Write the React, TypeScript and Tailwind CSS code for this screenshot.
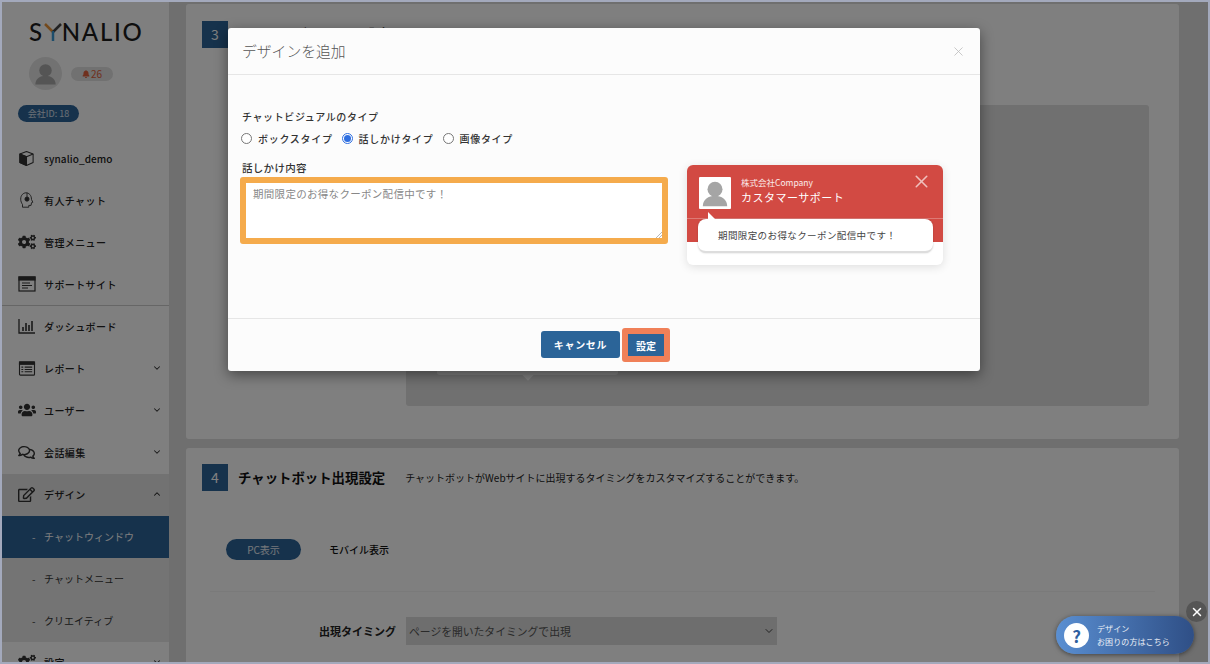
import { ChevronDown, ChevronUp, X } from "lucide-react";
import { FaBell, FaCogs, FaRegComments, FaRegEdit, FaUsers } from "react-icons/fa";
import type { ReactNode } from "react";

const FONT = "font-['Noto_Sans_CJK_JP','Noto_Sans',sans-serif]";

function UserGlyph({ className }: { className?: string }) {
  return (
    <svg viewBox="0 0 32 32" className={className}>
      <circle cx="16" cy="12" r="8" fill="currentColor" />
      <path d="M3 30c0-7 6-11 13-11s13 4 13 11z" fill="currentColor" />
    </svg>
  );
}

function CubeIcon() {
  return (
    <svg viewBox="0 0 18 18" className="h-[17px] w-[17px]" fill="none" stroke="#333" strokeWidth="1.100" strokeLinejoin="round">
      <path d="M9 1.500l7 2.700v9L9 16.500l-7-3.300v-9z" />
      <path d="M2 4.200l7 3 7-3" />
      <path d="M2 4.200l7 3v9.300l-7-3.300z" fill="#333" />
    </svg>
  );
}

function HeadsetIcon() {
  return (
    <svg viewBox="0 0 20 20" className="h-[18px] w-[18px]" fill="none" stroke="#333" strokeWidth="1">
      <path d="M5 15v3h7v-2h2.500l.5-3 1.500-.5-1.500-3c0-5-3-7.500-6-7.500S3 4.500 3 9c0 2.500 1 4.500 2 6z" />
      <circle cx="10" cy="9" r="2.300" fill="#333" />
      <path d="M10 2v5" />
    </svg>
  );
}

function WindowIcon() {
  return (
    <svg viewBox="0 0 18 16" className="h-[16px] w-[18px]" fill="none" stroke="#333" strokeWidth="1.200">
      <rect x="1" y="1" width="16" height="14" />
      <rect x="1" y="1" width="16" height="3" fill="#333" />
      <path d="M4 7h8M4 9.500h10M4 12h6" />
    </svg>
  );
}

function BarsIcon() {
  return (
    <svg viewBox="0 0 18 16" className="h-[16px] w-[18px]" fill="none" stroke="#333" strokeWidth="1.300">
      <path d="M1 1v14h16" />
      <path d="M5 13V9M8 13V5M11 13V7M14 13V3" strokeWidth="1.600" />
    </svg>
  );
}

function ListIcon() {
  return (
    <svg viewBox="0 0 18 16" className="h-[15px] w-[18px]" fill="none" stroke="#333" strokeWidth="1.200">
      <rect x="1" y="1" width="16" height="14" rx="1" />
      <rect x="1" y="1" width="16" height="2.500" fill="#333" />
      <path d="M3 6.500h2M3 9h2M3 11.500h2M6.500 6.500h8M6.500 9h8M6.500 11.500h8" />
    </svg>
  );
}

function NavRow({ icon, label, chevron, bg, latin }: { icon: ReactNode; label: string; chevron?: "up" | "down"; bg?: string; latin?: boolean }) {
  return (
    <div className={`flex h-[42px] shrink-0 items-center pb-[2px] pl-[16px] pr-[7px] ${bg ?? ""}`}>
      <div className="flex w-[26px] shrink-0 items-center text-[#333]">{icon}</div>
      <span className={`flex-1 text-[10px] font-medium text-[#222] ${latin ? "tracking-[0.1px]" : "tracking-[0.4px]"}`}>{label}</span>
      {chevron === "down" && <ChevronDown size={10} strokeWidth={2.500} className="text-[#333]" />}
      {chevron === "up" && <ChevronUp size={10} strokeWidth={2.500} className="text-[#222]" />}
    </div>
  );
}

function SubRow({ label, active }: { label: string; active?: boolean }) {
  return (
    <div className={`flex h-[42px] items-center pb-[2px] pl-[30px] text-[10px] ${active ? "bg-[#2c6499] text-white" : "text-[#333]"}`}>
      <span className="w-[12px]">-</span>
      {label}
    </div>
  );
}

function Sidebar() {
  return (
    <aside className="flex w-[167px] shrink-0 flex-col bg-white">
      <div className="h-[136px] shrink-0 pl-[27px]">
        <div className="flex items-center pt-[17px] font-['Lato',sans-serif] text-[24px] font-medium leading-[26px] tracking-[1.700px] text-[#1c1c1c]">
          S
          <svg viewBox="0 0 18 18" className="h-[18px] w-[18px]">
            <path d="M1 1l8 8" stroke="#e8943a" strokeWidth="2.500" fill="none" />
            <path d="M17 1L9 9" stroke="#444" strokeWidth="2.500" fill="none" />
            <path d="M9 8v10" stroke="#3b9bd6" strokeWidth="2.500" fill="none" />
          </svg>
          NALIO
        </div>
        <div className="mt-[12px] flex items-center">
          <div className="flex h-[33px] w-[33px] items-center justify-center rounded-full bg-[#e4e4e4]">
            <UserGlyph className="h-[25px] w-[25px] text-[#aaa]" />
          </div>
          <div className="ml-[9px] flex h-[14px] w-[42px] items-center justify-center gap-[1px] rounded-full bg-[#e2e2e2] text-[10px] text-[#e0603c]">
            <FaBell size={8} />
            26
          </div>
        </div>
        <div className="ml-[-11px] mt-[15px] flex h-[17px] w-[61px] items-center justify-center whitespace-pre rounded-full bg-[#2c6499] text-[9px] text-white/80">
          会社ID: 18
        </div>
      </div>
      <NavRow icon={<CubeIcon />} label="synalio_demo" latin />
      <NavRow icon={<HeadsetIcon />} label="有人チャット" />
      <NavRow icon={<FaCogs size={18} />} label="管理メニュー" />
      <NavRow icon={<WindowIcon />} label="サポートサイト" />
      <div className="-mt-px shrink-0 border-t border-[#ccc]" />
      <NavRow icon={<BarsIcon />} label="ダッシュボード" />
      <NavRow icon={<ListIcon />} label="レポート" chevron="down" />
      <NavRow icon={<FaUsers size={18} />} label="ユーザー" chevron="down" />
      <NavRow icon={<FaRegComments size={17} />} label="会話編集" chevron="down" />
      <NavRow icon={<FaRegEdit size={17} />} label="デザイン" chevron="up" bg="bg-[#e4e4e4]" />
      <div className="shrink-0 bg-[#e8e8e8]">
        <SubRow label="チャットウィンドウ" active />
        <SubRow label="チャットメニュー" />
        <SubRow label="クリエイティブ" />
      </div>
      <NavRow icon={<FaCogs size={18} />} label="設定" chevron="down" />
    </aside>
  );
}

function StepBox({ n }: { n: number }) {
  return (
    <div className="flex h-[27px] w-[26px] shrink-0 items-center justify-center bg-[#2c6499] text-[14px] text-white">{n}</div>
  );
}

function Main() {
  return (
    <main className="min-w-0 flex-1 overflow-hidden bg-[#dedede] pl-[17px] pr-[29px] pt-[2px]">
      <section className="h-[435px] rounded-[3px] bg-white pl-[16px] pr-[30px] pt-[17px]">
        <div className="flex items-center">
          <StepBox n={3} />
          <span className="ml-[10px] mt-[-3px] text-[14px] font-medium text-[#222]">チャットビジュアル設定</span>
        </div>
        <div className="ml-[204px] mt-[57px] h-[301px] rounded-[3px] bg-[#e0e0e0] pl-[31px] pt-[245px]">
          <div className="relative h-[25px] w-[181px] rounded-[3px] bg-white">
            <div className="absolute bottom-[-4px] left-[87px] h-[8px] w-[8px] rotate-45 bg-white" />
          </div>
        </div>
      </section>
      <section className="mt-[9px] h-[300px] rounded-[3px] bg-white pl-[16px] pr-[24px] pt-[16px]">
        <div className="flex items-center">
          <StepBox n={4} />
          <span className="ml-[10px] text-[13.400px] font-bold text-[#111]">チャットボット出現設定</span>
          <span className="mb-[1px] ml-[20px] text-[10px] text-[#222]">チャットボットがWebサイトに出現するタイミングをカスタマイズすることができます。</span>
        </div>
        <div className="ml-[24px] mt-[48px] flex items-center">
          <div className="flex h-[21px] w-[75px] items-center justify-center rounded-full bg-[#2c6499] pb-[1px] text-[10px] text-white/90">PC表示</div>
          <div className="ml-[28px] text-[10px] font-medium text-[#111]">モバイル表示</div>
        </div>
        <div className="ml-[8px] mt-[31px] border-t border-[#f4f4f4]" />
        <div className="mt-[25px] flex items-center">
          <div className="w-[194px] text-right text-[11px] font-bold text-[#222]">出現タイミング</div>
          <div className="ml-[10px] flex h-[28px] w-[371px] items-center justify-between bg-[#dcdcdc] pl-[3px] pr-[2px] text-[10.800px] text-[#555]">
            ページを開いたタイミングで出現
            <ChevronDown size={12} className="text-[#444]" />
          </div>
        </div>
      </section>
    </main>
  );
}

function RadioOption({ label, checked }: { label: string; checked?: boolean }) {
  return (
    <div className="flex items-center">
      <span className={`flex h-[11px] w-[11px] items-center justify-center rounded-full border ${checked ? "border-[#2f6fe0]" : "border-[#777]"} bg-white`}>
        {checked && <span className="h-[7px] w-[7px] rounded-full bg-[#2f6fe0]" />}
      </span>
      <span className="ml-[6px] text-[10px] font-medium tracking-[0.7px] text-[#333]">{label}</span>
    </div>
  );
}

function ChatPreview() {
  return (
    <div className="relative h-[100px] w-[256px] rounded-[6px] bg-white shadow-[0_2px_10px_rgba(0,0,0,0.12)]">
      <div className="h-[77px] rounded-t-[6px] bg-[#d24a43]">
        <div className="flex h-[54px] items-start border-b border-[#dd7a75] pl-[12px] pr-[11px] pt-[12px]">
          <div className="flex h-[32px] w-[32px] shrink-0 items-center justify-center rounded-[1px] bg-white">
            <UserGlyph className="h-[30px] w-[30px] text-[#a5a5a5]" />
          </div>
          <div className="ml-[10px] mt-[-2px] flex-1 text-white">
            <div className="text-[8.500px] leading-[14px] text-white/90">株式会社Company</div>
            <div className="mt-[1px] text-[11px] leading-[15px] tracking-[0.5px]">カスタマーサポート</div>
          </div>
          <X size={21} strokeWidth={1.800} className="mt-[-6px] text-[#f0c0bd]" />
        </div>
      </div>
      <div className="absolute left-[11px] top-[54px] flex h-[34px] w-[235px] items-center rounded-[8px] border-b-2 border-[#ddd] bg-white pl-[20px] text-[9.500px] tracking-[0.4px] text-[#444] shadow-[0_0_2px_rgba(0,0,0,0.2)]">
        期間限定のお得なクーポン配信中です！
        <div className="absolute left-[10px] top-[-7px] h-0 w-0 border-b-[8px] border-l-[8px] border-r-0 border-b-white border-l-transparent [transform:scaleX(-1)]" />
      </div>
    </div>
  );
}

function Modal() {
  return (
    <div className="absolute left-[226px] top-[26px] flex h-[343px] w-[752px] flex-col rounded-[3px] bg-[#fcfcfc] shadow-[0_4px_14px_rgba(0,0,0,0.45)]">
      <div className="flex h-[47px] shrink-0 items-center justify-between border-b border-[#e6e6e6] pl-[14px] pr-[14px]">
        <h2 className="text-[14.800px] font-light text-[#555]">デザインを追加</h2>
        <X size={15} strokeWidth={1.300} className="text-[#bdbdbd]" />
      </div>
      <div className="flex flex-1 pl-[12px] pt-[34px]">
        <div className="w-[428px]">
          <div className="pl-[2px] text-[10px] font-medium tracking-[0.6px] text-[#333]">チャットビジュアルのタイプ</div>
          <div className="mt-[7px] flex gap-[9px] pl-[1px]">
            <RadioOption label="ボックスタイプ" />
            <RadioOption label="話しかけタイプ" checked />
            <RadioOption label="画像タイプ" />
          </div>
          <div className="mt-[14px] pl-[2px] text-[10.500px] font-medium leading-[15px] tracking-[0.3px] text-[#333]">話しかけ内容</div>
          <div className="relative mt-[2px] h-[67px] rounded-[3px] border-[6px] border-[#f5ab4c] bg-white pl-[7px] pt-[3px] text-[10.500px] tracking-[0.3px] text-[#888]">
            期間限定のお得なクーポン配信中です！
            <svg viewBox="0 0 6 6" className="absolute bottom-0 right-0 h-[6px] w-[6px]" stroke="#888" strokeWidth="0.600">
              <path d="M0 6l6-6M3 6l3-3" />
            </svg>
          </div>
        </div>
        <div className="ml-[19px] pt-[56px]">
          <ChatPreview />
        </div>
      </div>
      <div className="flex h-[53px] shrink-0 items-center justify-center border-t border-[#e6e6e6] pl-[3px]">
        <button className="mb-[2px] h-[27px] w-[79px] rounded-[3px] bg-[#2b6498] text-[10px] font-bold tracking-[0.7px] text-white">キャンセル</button>
        <button className="ml-[2px] flex h-[34px] w-[48px] items-center justify-center rounded-[3px] border-[6px] border-[#f08058] bg-[#2b6498] text-[10px] font-bold text-white">設定</button>
      </div>
    </div>
  );
}

function HelpWidget() {
  return (
    <>
      <div className="absolute bottom-[40px] right-[1px] flex h-[21px] w-[21px] items-center justify-center rounded-full bg-[#555] text-white">
        <X size={14} strokeWidth={2.500} />
      </div>
      <div className="absolute bottom-[8px] right-[14px] flex h-[38px] w-[138px] items-center rounded-full bg-linear-to-r from-[#5a8fd2] to-[#2f4f86] pl-[8px] shadow-[0_1px_5px_rgba(0,0,0,0.5)]">
        <div className="flex h-[25px] w-[25px] items-center justify-center rounded-full bg-white text-[17px] font-bold leading-none text-[#2f5f9f]">?</div>
        <div className="ml-[8px] text-[8px] leading-[13px] tracking-[0.1px] text-white/90">
          <div>デザイン</div>
          <div>お困りの方はこちら</div>
        </div>
      </div>
    </>
  );
}

export default function App() {
  return (
    <div className={`relative h-[664px] w-[1210px] overflow-hidden border-2 border-[#a3a9bc] ${FONT}`}>
      <div className="flex h-full w-full">
        <Sidebar />
        <Main />
      </div>
      <div className="absolute inset-0 bg-black/50" />
      <Modal />
      <HelpWidget />
    </div>
  );
}
